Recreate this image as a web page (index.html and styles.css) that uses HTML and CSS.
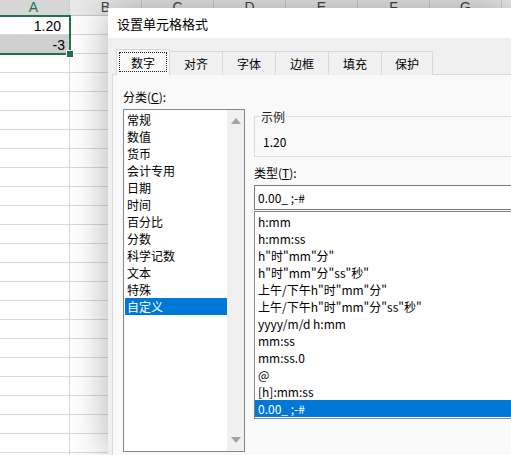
FILE: index.html
```html
<!DOCTYPE html>
<html lang="zh-CN">
<head>
    <meta charset="UTF-8">
    <title>设置单元格格式</title>
    <link rel="stylesheet" href="styles.css">
</head>
<body>

    <div class="sheet" id="sheet">
        <div class="row head">
            <div class="cell col-sel">A</div>
            <div class="cell">B</div>
            <div class="cell">C</div>
            <div class="cell">D</div>
            <div class="cell">E</div>
            <div class="cell">F</div>
            <div class="cell">G</div>
            <div class="cell narrow"></div>
        </div>
        <div class="row" id="r1">
            <div class="cell num"><span class="pos">1.20</span></div>
        </div>
        <div class="row" id="r2">
            <div class="cell num shade">-3</div>
        </div>
    </div>

    <div class="sel-box"><span class="handle"></span></div>

    <div class="dialog">
        <div class="title">设置单元格格式</div>
        <div class="dlg-body">
            <div class="tabs">
                <div class="tab active"><span class="focus">数字</span></div>
                <div class="tab">对齐</div>
                <div class="tab">字体</div>
                <div class="tab">边框</div>
                <div class="tab">填充</div>
                <div class="tab short">保护</div>
            </div>
            <div class="panel">
                <div class="left-col">
                    <div class="label">分类(<u>C</u>):</div>
                    <div class="listbox cat">
                        <ul class="items">
                            <li>常规</li>
                            <li>数值</li>
                            <li>货币</li>
                            <li>会计专用</li>
                            <li>日期</li>
                            <li>时间</li>
                            <li>百分比</li>
                            <li>分数</li>
                            <li>科学记数</li>
                            <li>文本</li>
                            <li>特殊</li>
                            <li class="picked">自定义</li>
                        </ul>
                        <div class="vscroll">
                            <span class="arrow up"></span>
                            <span class="arrow down"></span>
                        </div>
                    </div>
                </div>
                <div class="right-col">
                    <fieldset class="sample">
                        <legend>示例</legend>
                        <div class="sample-val">1.20</div>
                    </fieldset>
                    <div class="label type-label">类型(<u>T</u>):</div>
                    <div class="input">0.00_ ;-#</div>
                    <ul class="listbox types">
                        <li>h:mm</li>
                        <li>h:mm:ss</li>
                        <li>h"时"mm"分"</li>
                        <li>h"时"mm"分"ss"秒"</li>
                        <li>上午/下午h"时"mm"分"</li>
                        <li>上午/下午h"时"mm"分"ss"秒"</li>
                        <li>yyyy/m/d h:mm</li>
                        <li>mm:ss</li>
                        <li>mm:ss.0</li>
                        <li>@</li>
                        <li>[h]:mm:ss</li>
                        <li class="picked">0.00_ ;-#</li>
                    </ul>
                </div>
            </div>
        </div>
    </div>

    <script>
        // fill the empty grid cells and rows
        function addCells(row, count) {
            for (let i = 0; i < count; i++) {
                let div = document.createElement("div");
                div.className = "cell";
                row.appendChild(div);
            }
        }

        addCells(document.getElementById("r1"), 7);
        addCells(document.getElementById("r2"), 7);

        let sheet = document.getElementById("sheet");
        for (let r = 0; r < 22; r++) {
            let row = document.createElement("div");
            row.className = "row";
            addCells(row, 8);
            sheet.appendChild(row);
        }
    </script>

</body>
</html>
```

FILE: styles.css
```css
body {
    margin: 0;
    padding: 0;
    overflow: hidden;
    background-color: white;
    font-family: "Noto Sans CJK SC", sans-serif;
    font-size: 12px;
    color: black;
}
ul {
    list-style: none;
    margin: 0;
    padding: 0;
}

/* sheet */
.sheet {
    margin-left: -2px;
    width: 513px;
    height: 455px;
    overflow: hidden;
}
.row {
    display: flex;
    height: 19px;
}
.row.head {
    height: 16px;
    background-color: #e9e9e9;
}
.cell {
    flex: none;
    width: 72px;
    box-sizing: border-box;
    border-right: 1px solid #dadada;
    border-bottom: 1px solid #dadada;
    font-family: "Liberation Sans", sans-serif;
    font-size: 14px;
    line-height: 18px;
    padding: 1px 4px 0 4px;
}
.head .cell {
    text-align: center;
    font-size: 14px;
    line-height: 15px;
    padding: 0;
    color: #444;
    border-right-color: #cfcfcf;
    border-bottom-color: #c8c8c8;
}
.head .col-sel {
    color: #217346;
    background-color: #d6d6d6;
}
.num {
    text-align: right;
}
.pos {
    padding-right: 4px;
}
.shade {
    background-color: #cfcfcf;
}
.sel-box {
    position: absolute;
    left: -5px;
    top: 15px;
    width: 72px;
    height: 36px;
    border: 2px solid #217346;
}
.handle {
    position: absolute;
    right: -5px;
    bottom: -5px;
    width: 6px;
    height: 6px;
    background-color: #217346;
    border: 1px solid white;
}

/* dialog */
.dialog {
    position: absolute;
    left: 108px;
    top: 8px;
    width: 403px;
    height: 447px;
    overflow: hidden;
    background-color: #f0f0f0;
    box-shadow: 0 0 38px rgba(0, 0, 0, 0.32);
}
.title {
    height: 30px;
    background-color: white;
    font-size: 13px;
    line-height: 31px;
    padding-left: 9px;
}
.dlg-body {
    padding: 11px 0 0 4px;
}
.tabs {
    display: flex;
    align-items: flex-end;
    padding-left: 4px;
    height: 26px;
}
.tab {
    width: 54px;
    height: 24px;
    box-sizing: border-box;
    border: 1px solid #d9d9d9;
    border-bottom: none;
    margin-right: -1px;
    background-color: #f0f0f0;
    text-align: center;
    line-height: 23px;
}
.tab.short {
    width: 52px;
}
.tab.active {
    height: 26px;
    width: 54px;
    background-color: #f9f9f9;
    padding: 2px;
    position: relative;
    z-index: 1;
}
.focus {
    display: block;
    border: 1px dotted #222;
    height: 20px;
    line-height: 19px;
    box-sizing: border-box;
}
.panel {
    display: flex;
    align-items: flex-start;
    width: 430px;
    height: 400px;
    background-color: #f9f9f9;
    border: 1px solid #d9d9d9;
    margin-top: -1px;
    padding: 13px 0 0 10px;
}
.label {
    height: 17px;
    line-height: 17px;
}
.left-col {
    width: 122px;
    margin-right: 9px;
}
.listbox {
    background-color: white;
    border: 1px solid #828790;
    box-sizing: border-box;
}
.cat {
    margin-top: 4px;
    height: 343px;
    display: flex;
}
.cat .items {
    flex: 1;
    padding: 1px 0 0 1px;
}
.listbox li {
    height: 17px;
    line-height: 17px;
    padding-left: 2px;
    white-space: nowrap;
}
.listbox li.picked {
    background-color: #0078d7;
    color: white;
}
.vscroll {
    width: 17px;
    background-color: #f0f0f0;
    display: flex;
    flex-direction: column;
    justify-content: space-between;
    align-items: center;
    padding: 8px 0;
}
.arrow {
    width: 0;
    height: 0;
    border-left: 5px solid transparent;
    border-right: 5px solid transparent;
}
.arrow.up {
    border-bottom: 6px solid #a3a3a3;
}
.arrow.down {
    border-top: 6px solid #a3a3a3;
}
.right-col {
    width: 290px;
}
.sample {
    margin: 20px 0 0 0;
    padding: 0 0 6px 8px;
    border: 1px solid #dcdcdc;
}
.sample legend {
    margin-left: -3px;
    padding: 0 1px;
    line-height: 17px;
    color: #222;
}
.sample-val {
    margin-top: 8px;
    line-height: 17px;
}
.type-label {
    margin-top: 7px;
}
.input {
    margin-top: 4px;
    height: 25px;
    box-sizing: border-box;
    background-color: white;
    border: 1px solid #7a7a7a;
    line-height: 23px;
    padding-left: 3px;
}
.types {
    margin-top: 1px;
    padding: 1px 0;
}
.types li {
    padding-left: 3px;
}
```
